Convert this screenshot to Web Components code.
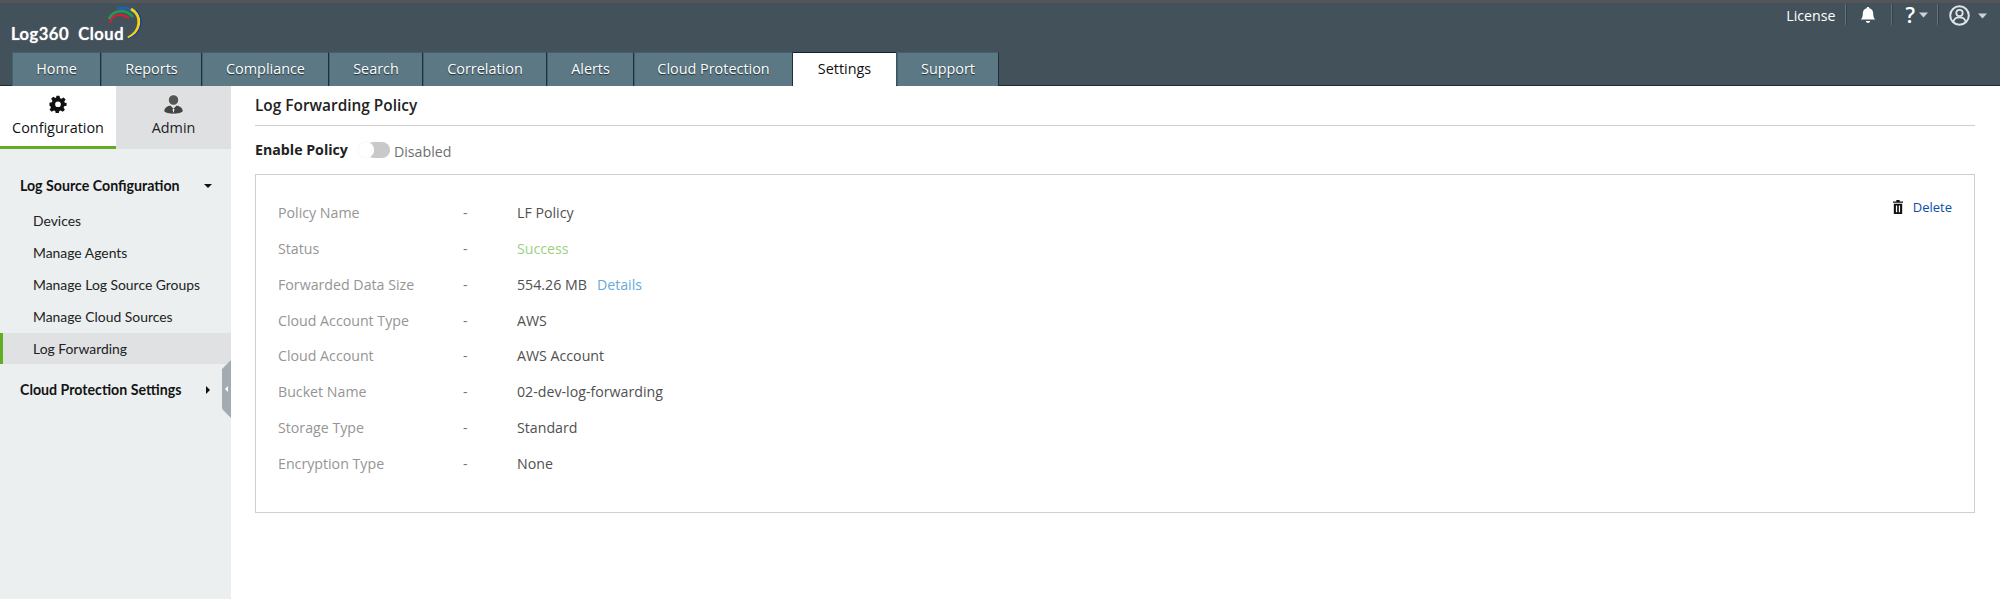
<!DOCTYPE html>
<html><head><meta charset="utf-8"><title>Log Forwarding Policy</title>
<style>
html,body{margin:0;padding:0;height:599px;overflow:hidden;background:#fff;font-family:"Open Sans",sans-serif}
</style></head><body>
<app-shell>
  <top-bar></top-bar>
  <div style="display:flex;height:513px">
    <side-nav></side-nav>
    <policy-page></policy-page>
  </div>
</app-shell>
<script>
function def(name, html){
  customElements.define(name, class extends HTMLElement{
    constructor(){super();this.attachShadow({mode:'open'}).innerHTML=html;}
  });
}
def('app-shell','<style>:host{display:flex;flex-direction:column;height:599px}</style><slot></slot>');
def('nav-tab',`<style>
:host{display:block;box-sizing:border-box;height:34px;background:#5b7884;border:1px solid #3f6372;border-bottom:0;border-right:1px solid #1d2f38;color:#fff;font:14.4px/32px "Open Sans",sans-serif;text-align:center;text-shadow:0 1px 1px #1c2c33}
:host([active]){background:#fff;color:#111;text-shadow:none;border:0;border-top:1px solid #10222c}
</style><slot></slot>`);
def('top-bar',`<style>
:host{display:block;box-sizing:border-box;height:86px;background:#43525a;border-top:3px solid #55565a;border-bottom:1px solid #202e35;position:relative;font-family:"Open Sans",sans-serif;color:#fff}
.head{display:flex;height:49px;justify-content:space-between}
.logo{position:relative;padding:19px 0 0 11px;font:600 16.6px/24px Lato,"Open Sans",sans-serif;letter-spacing:.5px;white-space:pre;text-shadow:0 0 1px #fff}
.logo svg{position:absolute;left:105px;top:3px}
.tools{display:flex;align-items:flex-start;padding:0;height:26px}
.tools>*{display:flex;align-items:center;height:24px}
.sep{width:1px;height:21px;margin-top:1px;background:#62727a;border-right:1px solid #354349}
.tabs{display:flex;padding-left:12px}
</style>
<div class="head">
  <div class="logo"><span>Log360  Cloud</span><svg width="38" height="36" viewBox="0 0 38 36" fill="none">
      <path d="M5 17 C6 9 15 6 24 12" stroke="#d0213a" stroke-width="2.300"/>
      <path d="M4 13 C8 4 20 2 28 11" stroke="#1f9c52" stroke-width="2.600"/>
      <path d="M12 3 C20 0 28 3 32 9" stroke="#2260b8" stroke-width="2.600"/>
      <path d="M26 3 C37 9 37 25 23 32" stroke="#f1d410" stroke-width="3"/>
      <path d="M31 4 C39 12 38 27 23 33" stroke="#1b3d9a" stroke-width="1.300"/>
    </svg></div>
  <div class="tools">
    <span style="font-size:14.200px;margin-right:10px">License</span><i class="sep"></i>
    <span style="margin:0 14px 0 12px"><svg width="18" height="18" viewBox="0 0 18 18" fill="#fff"><path d="M9 1c.8 0 1.300.5 1.400 1.200C13 3 14.200 5 14.200 7.500c0 3 .6 4.600 2 6H1.800c1.400-1.400 2-3 2-6C3.800 5 5 3 7.600 2.200 7.700 1.500 8.200 1 9 1z"/><path d="M6.800 15h4.400c-.3 1.200-1.100 2-2.200 2s-1.900-.8-2.200-2z"/></svg></span><i class="sep"></i>
    <span style="font-size:21px;font-weight:600;margin-left:12px">?</span>
    <svg style="margin:0 9px 0 4px;height:24px" width="9" height="5" viewBox="0 0 9 5" fill="#ccd2d5"><path d="M0 0h9L4.500 5z"/></svg><i class="sep"></i>
    <svg style="margin-left:10px;padding:2px 0 1px;height:21px" width="21" height="21" viewBox="0 0 21 21" fill="none" stroke="#dfe4e6"><circle cx="10.500" cy="10.500" r="9.300" stroke-width="2"/><circle cx="10.500" cy="8" r="3.200" stroke-width="1.800"/><path d="M4.500 16.500c.6-3 3-4.200 6-4.200s5.400 1.200 6 4.200" stroke-width="1.800"/></svg>
    <svg style="margin:0 13px 0 8px;height:26px" width="9" height="5" viewBox="0 0 9 5" fill="#ccd2d5"><path d="M0 0h9L4.500 5z"/></svg>
  </div>
</div>
<div class="tabs">
  <nav-tab style="width:89px">Home</nav-tab>
  <nav-tab style="width:101px">Reports</nav-tab>
  <nav-tab style="width:127px">Compliance</nav-tab>
  <nav-tab style="width:94px">Search</nav-tab>
  <nav-tab style="width:124px">Correlation</nav-tab>
  <nav-tab style="width:87px">Alerts</nav-tab>
  <nav-tab style="width:159px">Cloud Protection</nav-tab>
  <nav-tab active style="width:103px;margin-right:1px">Settings</nav-tab>
  <nav-tab style="width:102px">Support</nav-tab>
</div>`);
def('nav-item',`<style>
:host{display:block;box-sizing:border-box;height:32px;padding-left:33px;font:13.9px/32px Lato,sans-serif;color:#222}
:host([active]){background:#e0e1e3;box-shadow:inset 3px 0 0 #63ad25;height:31px}
</style><slot></slot>`);
def('nav-group',`<style>
:host{display:flex;align-items:center;justify-content:space-between;box-sizing:border-box;height:24px;padding:0 19px 0 20px;font:bold 14.2px/24px Lato,sans-serif;color:#141414}
svg{display:block}
</style><slot></slot><svg width="8" height="8" viewBox="0 0 8 8" fill="#111"><path style="d:path(var(--p))"/></svg>`);
def('side-tab',`<style>
:host{display:flex;flex-direction:column;align-items:center;box-sizing:border-box;height:63px;flex:1 1 0;padding-top:7px;background:#dfe0e2;font:14.400px/20px "Open Sans",sans-serif;color:#222}
:host([active]){background:#fff;border-bottom:3px solid #63ad25;color:#111}
.i{height:22px;display:flex;align-items:center;margin-bottom:3px}
</style><div class="i"><slot name="icon"></slot></div><slot></slot>`);
def('side-nav',`<style>
:host{display:block;box-sizing:border-box;width:231px;height:513px;flex:none;background:#ebeff0;position:relative}
.tabs{display:flex}
.list{padding-top:25px}
.group2{margin-top:14px}
.handle{position:absolute;right:0;top:274px}
</style>
<div class="tabs">
  <side-tab active style="flex:0 0 116px"><svg slot="icon" width="18" height="18" viewBox="0 0 24 24" fill="#111"><path fill-rule="evenodd" d="M10 1h4l.7 3.200 1.900.8 2.800-1.800 2.800 2.800-1.800 2.800.8 1.900L23.400 10.400v3.800l-3.200.7-.8 1.900 1.800 2.800-2.800 2.800-2.800-1.800-1.900.8-.7 3.200h-4l-.7-3.200-1.900-.8-2.800 1.800-2.800-2.800 1.800-2.800-.8-1.900L.6 14.200v-3.800l3.200-.7.800-1.900L2.800 5 5.600 2.200l2.800 1.800 1-.8zM12 8.500a3.800 3.800 0 1 0 0 7.600 3.800 3.800 0 0 0 0-7.600z"/></svg>Configuration</side-tab>
  <side-tab><svg slot="icon" width="21" height="21" viewBox="0 0 21 21"><circle cx="10.500" cy="6" r="5.300" fill="#555" stroke="#fff" stroke-width=".8"/><path d="M.8 17c.4-3.500 3.600-5.400 6.600-5.800l3.100 3 3.100-3c3 .4 6.200 2.300 6.600 5.800-.9 2-4.500 3-9.700 3S1.700 19 .8 17z" fill="#444" stroke="#fff" stroke-width=".6"/><path d="M10.500 14.500l-1 1 1 3.500 1-3.500z" fill="#eee"/></svg>Admin</side-tab>
</div>
<div class="list">
  <nav-group style="--p:'M0 2h8L4 6z'">Log Source Configuration</nav-group>
  <div style="height:7px"></div>
  <nav-item>Devices</nav-item>
  <nav-item>Manage Agents</nav-item>
  <nav-item>Manage Log Source Groups</nav-item>
  <nav-item>Manage Cloud Sources</nav-item>
  <nav-item active>Log Forwarding</nav-item>
  <div class="group2"><nav-group style="--p:'M2 0l4 4-4 4z'">Cloud Protection Settings</nav-group></div>
</div>
<svg class="handle" width="9" height="58" viewBox="0 0 9 58"><path d="M9 0v58L1 50 0 48V9l1-1z" fill="#a3adb1"/><path d="M6 26v6l-3-3z" fill="#fff"/></svg>`);
def('info-row',`<style>
:host{display:flex;height:35.850px;font:14.200px/35.850px "Open Sans",sans-serif;color:#505050}
.l{width:185px;color:#959595}.d{width:54px;color:#777}
.v{display:flex;gap:10px}
</style><span class="l"><slot name="label"></slot></span><span class="d">-</span><span class="v"><slot></slot></span>`);
def('policy-page',`<style>
:host{display:block;flex:1;box-sizing:border-box;padding:0 25px 0 24px;font-family:"Open Sans",sans-serif}
h1{margin:0;height:40px;box-sizing:border-box;padding-top:8px;border-bottom:1px solid #cfcfcf;font:600 15.400px/24px "Open Sans",sans-serif;color:#222}
.en{display:flex;align-items:center;height:48px}
.en b{font:bold 14.200px/20px "Open Sans",sans-serif;color:#222;margin-right:10px}
.en span{font-size:14.200px;color:#6f6f6f;margin-left:4px;position:relative;top:1px}
.tg{width:24px;height:16px;border-radius:8px;background:#c9c9c9;position:relative;margin-left:8px}
.tg::before{content:"";position:absolute;left:-8px;top:0;width:16px;height:16px;border-radius:50%;background:#fff;box-shadow:0 0 1px #ddd}
.box{box-sizing:border-box;height:339px;border:1px solid #cfcfcf;padding:20px 22px;position:relative}
.del{position:absolute;right:22px;top:22px;display:flex;align-items:center;gap:10px;font-size:13px;color:#0a4ea6;line-height:20px}
.s{color:#9bd183}.a{color:#67a9db}
</style>
<h1>Log Forwarding Policy</h1>
<div class="en"><b>Enable Policy</b><i class="tg"></i><span>Disabled</span></div>
<div class="box">
  <a class="del"><svg width="10" height="14" viewBox="0 0 12 15" preserveAspectRatio="none" fill="#111"><path d="M4 0h4v1.500h4V3H0V1.500h4zM1 4h10v11H1zM3.500 6v7h1.500V6zM7 6v7h1.500V6z" fill-rule="evenodd"/></svg>Delete</a>
  <info-row><span slot="label">Policy Name</span>LF Policy</info-row>
  <info-row><span slot="label">Status</span><span class="s">Success</span></info-row>
  <info-row><span slot="label">Forwarded Data Size</span>554.26 MB<span class="a">Details</span></info-row>
  <info-row><span slot="label">Cloud Account Type</span>AWS</info-row>
  <info-row><span slot="label">Cloud Account</span>AWS Account</info-row>
  <info-row><span slot="label">Bucket Name</span>02-dev-log-forwarding</info-row>
  <info-row><span slot="label">Storage Type</span>Standard</info-row>
  <info-row><span slot="label">Encryption Type</span>None</info-row>
</div>`);
</script>
</body></html>
